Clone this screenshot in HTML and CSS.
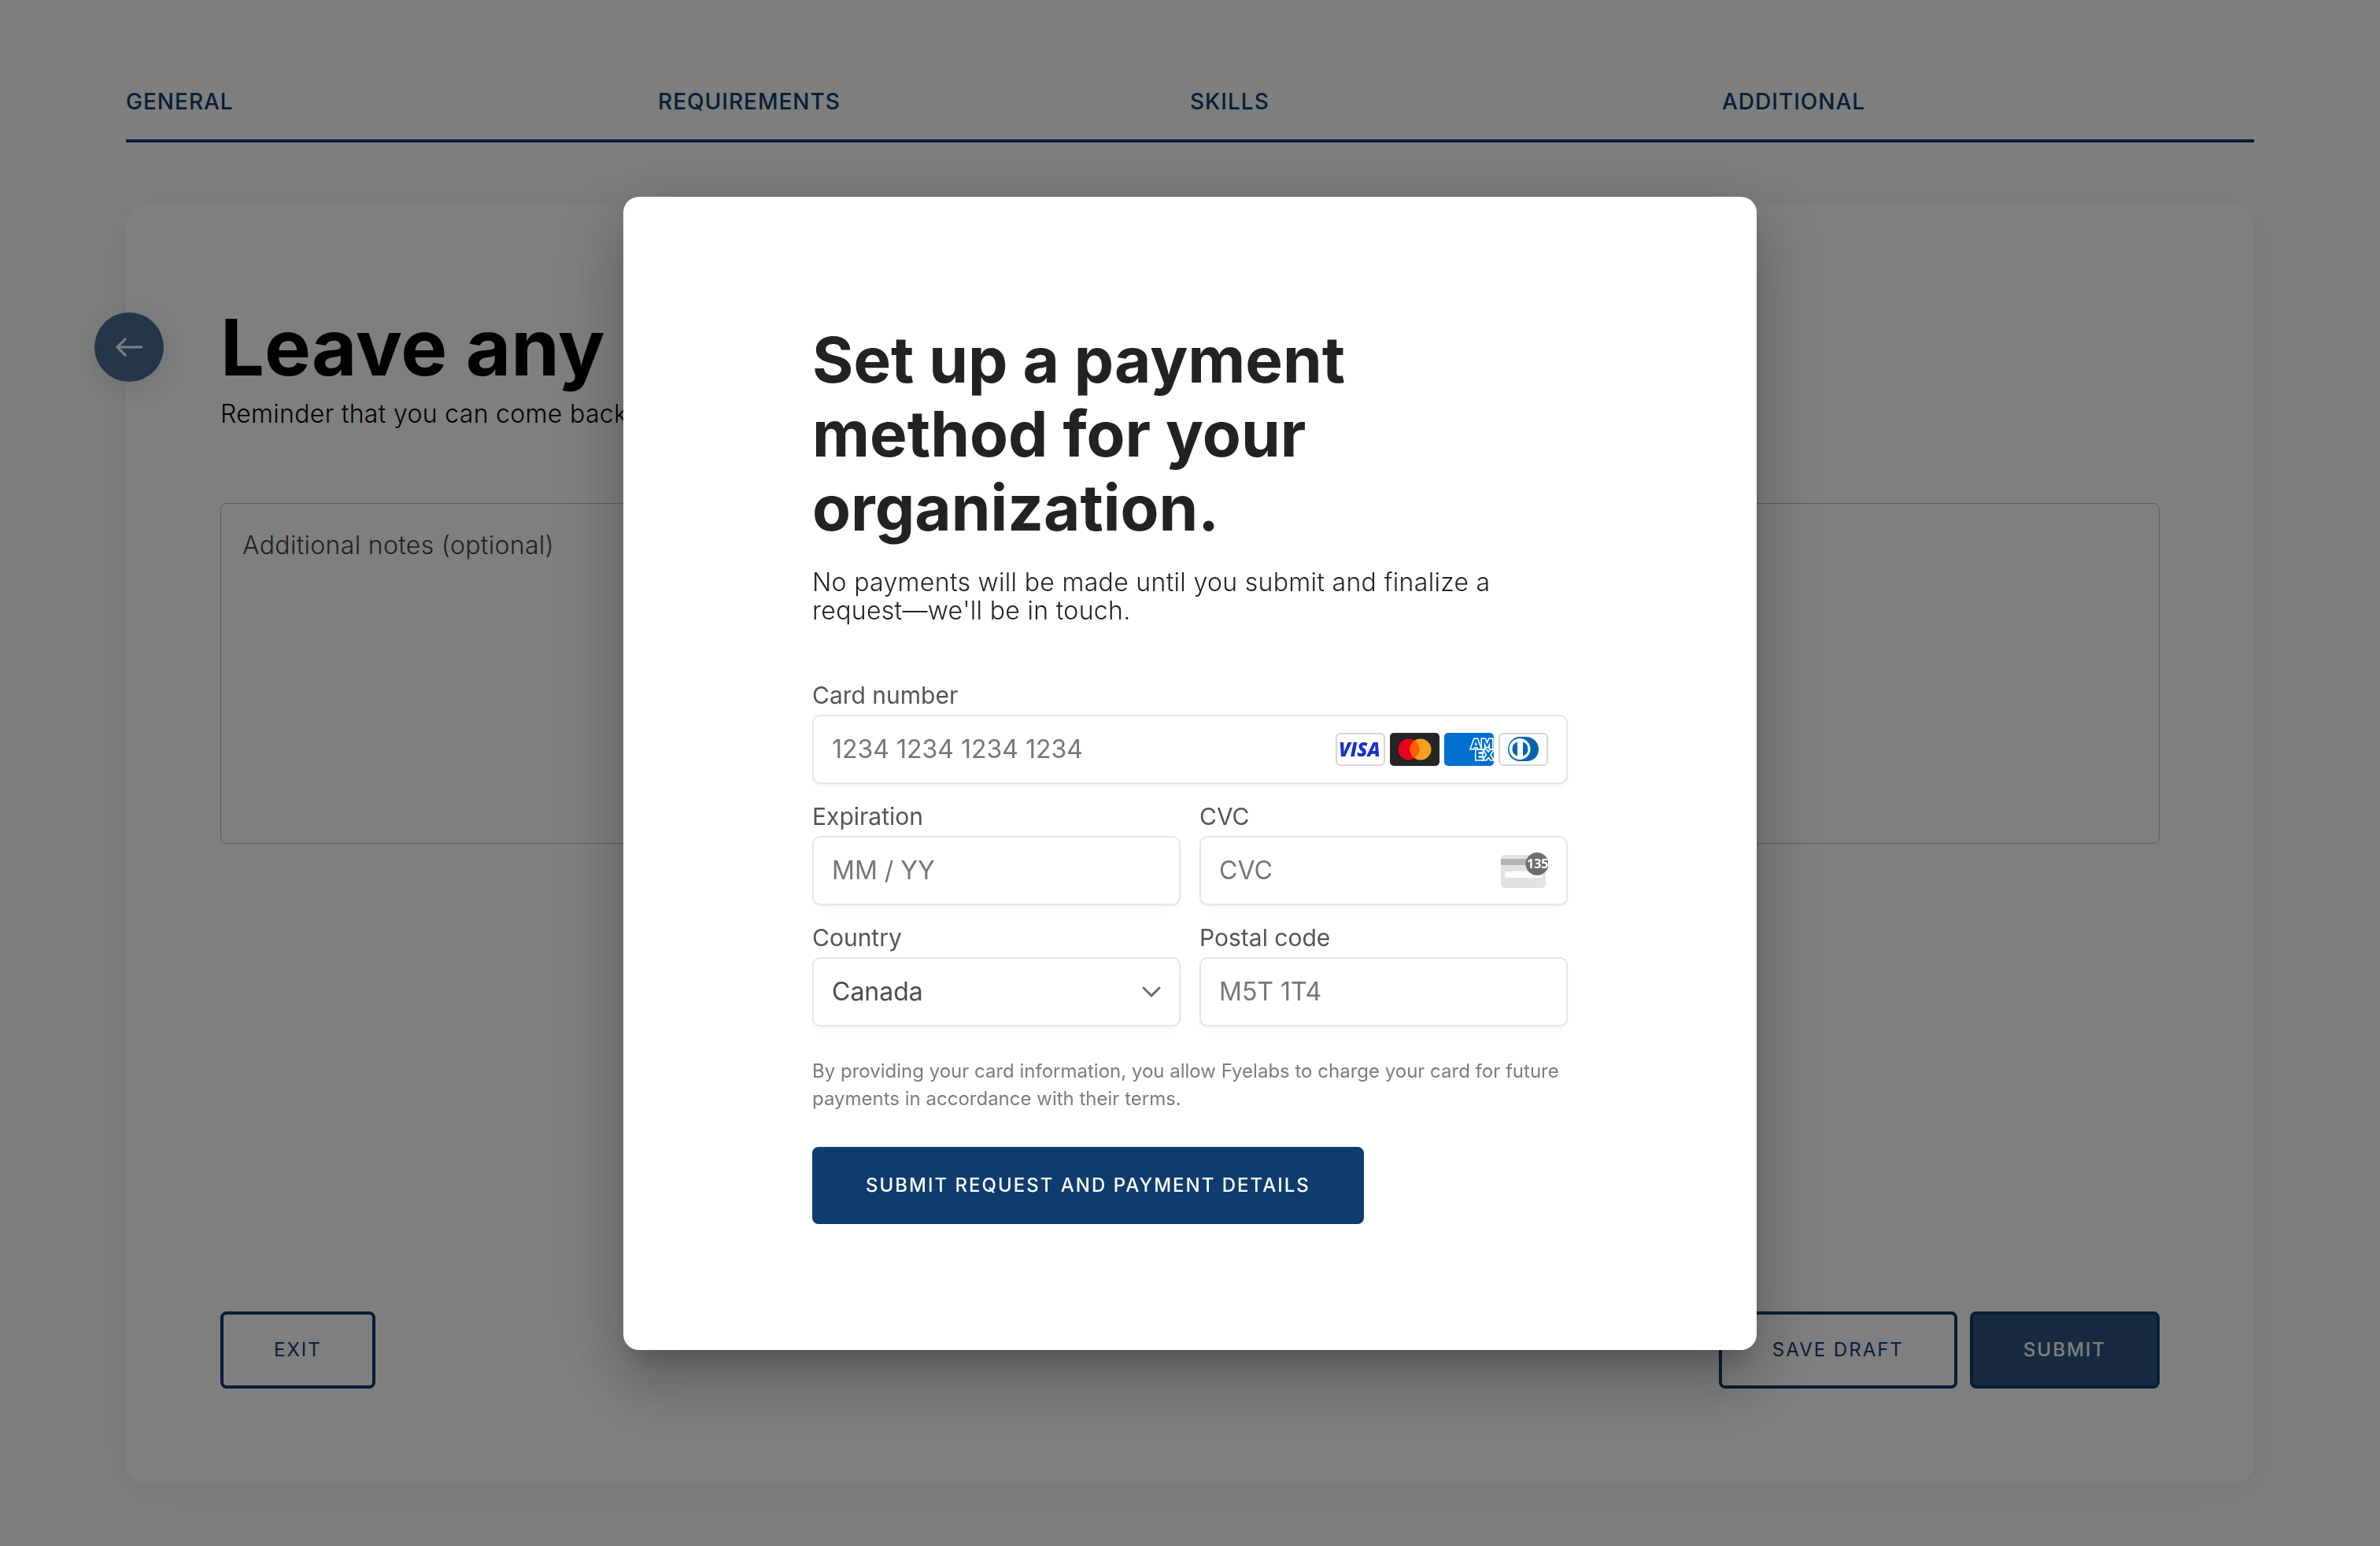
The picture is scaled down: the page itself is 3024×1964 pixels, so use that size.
FILE: index.html
```html
<!DOCTYPE html>
<html lang="en">
<head>
<meta charset="utf-8">
<meta name="viewport" content="width=device-width, initial-scale=1">
<title>Additional notes</title>
<link rel="stylesheet" href="styles.css">
</head>
<body>
<div class="page">
  <nav class="steps" aria-label="Steps">
    <a class="step" href="#general">GENERAL</a>
    <a class="step" href="#requirements">REQUIREMENTS</a>
    <a class="step" href="#skills">SKILLS</a>
    <a class="step" href="#additional">ADDITIONAL</a>
  </nav>
  <main class="card">
    <button class="back" type="button" aria-label="Back">
      <svg class="back-icon" viewBox="0 0 36 28" fill="none" stroke="currentColor" stroke-width="3"><path d="M35 14H3M14 3L3 14l11 11"/></svg>
    </button>
    <h1 class="card-title">Leave any</h1>
    <p class="card-text">Reminder that you can come back</p>
    <textarea class="notes" placeholder="Additional notes (optional)" aria-label="Additional notes (optional)"></textarea>
    <footer class="actions">
      <button class="btn btn-outline" type="button">EXIT</button>
      <div class="actions-end">
        <button class="btn btn-outline" type="button">SAVE DRAFT</button>
        <button class="btn btn-submit" type="button">SUBMIT</button>
      </div>
    </footer>
  </main>
</div>

<div class="overlay">
  <form class="modal" role="dialog" aria-modal="true" aria-labelledby="modal-title">
    <h2 class="modal-title" id="modal-title">Set up a payment method for your organization.</h2>
    <p class="modal-text">No payments will be made until you submit and finalize a request—we'll be in touch.</p>
    <div class="fields">
      <div class="field field-wide">
        <label class="label" for="number">Card number</label>
        <div class="control">
          <input class="input" id="number" type="text" placeholder="1234 1234 1234 1234">
          <div class="brands">
            <svg class="brand" viewBox="0 0 63 42"><rect x="1" y="1" width="61" height="40" rx="5" fill="#fff" stroke="#d6d6d6" stroke-width="2"/><text x="4" y="30" class="visa">VISA</text></svg>
            <svg class="brand" viewBox="0 0 63 42"><rect width="63" height="42" rx="5" fill="#252525"/><circle cx="24" cy="21" r="13.500" fill="#eb001b"/><circle cx="39" cy="21" r="13.500" fill="#f79e1b"/><path d="M31.500 9.800a13.500 13.500 0 0 1 0 22.400a13.500 13.500 0 0 1 0-22.400z" fill="#ff5f00"/></svg>
            <svg class="brand" viewBox="0 0 63 42"><defs><clipPath id="amex"><rect width="63" height="42" rx="5"/></clipPath></defs><g clip-path="url(#amex)"><rect width="63" height="42" fill="#016fd0"/><text x="34" y="20" class="amex">AM</text><text x="39" y="34" class="amex">EX</text></g></svg>
            <svg class="brand" viewBox="0 0 63 42"><rect x="1" y="1" width="61" height="40" rx="5" fill="#fff" stroke="#d6d6d6" stroke-width="2"/><path d="M27 5h8c9 0 16 7 16 16s-7 15-16 15h-8c-9 0-15-7-15-15s6-16 15-16z" fill="#0165ac"/><circle cx="27" cy="20.500" r="13.500" fill="#fff"/><path d="M24 11.500a9.500 9.500 0 0 0 0 18zM31 11.500a9.500 9.500 0 0 1 0 18z" fill="#0165ac"/></svg>
          </div>
        </div>
      </div>
      <div class="field">
        <label class="label" for="expiry">Expiration</label>
        <div class="control"><input class="input" id="expiry" type="text" placeholder="MM / YY"></div>
      </div>
      <div class="field">
        <label class="label" for="cvc">CVC</label>
        <div class="control">
          <input class="input" id="cvc" type="text" placeholder="CVC">
          <svg class="cvc-icon" viewBox="0 0 60 46"><rect y="3" width="57" height="42" rx="5" fill="#e1e3e3"/><path d="M0 8h57v8H0z" fill="#b2b5b5"/><rect x="5" y="24" width="48" height="8" rx="3" fill="#fff"/><circle cx="46" cy="14.500" r="14.500" fill="#6c6e6e"/><text x="33" y="20" class="cvc-digits">135</text></svg>
        </div>
      </div>
      <div class="field">
        <label class="label" for="country">Country</label>
        <div class="control">
          <select class="input select" id="country"><option>Canada</option></select>
          <svg class="chevron" viewBox="0 0 24 14" fill="none" stroke="#6c6e6e" stroke-width="3" stroke-linecap="round"><path d="M2 2l10 10L22 2"/></svg>
        </div>
      </div>
      <div class="field">
        <label class="label" for="postal">Postal code</label>
        <div class="control"><input class="input" id="postal" type="text" placeholder="M5T 1T4"></div>
      </div>
    </div>
    <p class="terms">By providing your card information, you allow Fyelabs to charge your card for future payments in accordance with their terms.</p>
    <button class="btn btn-pay" type="submit">SUBMIT REQUEST AND PAYMENT DETAILS</button>
  </form>
</div>
</body>
</html>
```
FILE: styles.css
```css
* { box-sizing: border-box; }

body {
  margin: 0;
  background: #fafefd;
  font-family: Inter, "Liberation Sans", sans-serif;
  color: #000;
}

button, input, select, textarea { font-family: inherit; }

.page {
  min-height: 100vh;
  padding: 109px 160px 80px;
  display: flex;
  flex-direction: column;
  gap: 80px;
}

.steps {
  display: grid;
  grid-template-columns: repeat(4, 1fr);
  padding-bottom: 28px;
  border-bottom: 4px solid #0f3c6e;
}

.step {
  font-size: 28px;
  line-height: 40px;
  font-weight: 500;
  letter-spacing: 1px;
  color: #0f3c6e;
  text-decoration: none;
}

.card {
  position: relative;
  flex: 1;
  display: flex;
  flex-direction: column;
  padding: 120px;
  border-radius: 24px;
  background: #fff;
  box-shadow: 0 8px 60px rgba(0, 0, 0, 0.06);
}

.back {
  position: absolute;
  left: -40px;
  top: 136px;
  width: 88px;
  height: 88px;
  display: grid;
  place-items: center;
  padding: 0;
  border: 0;
  border-radius: 50%;
  background: #4a6d94;
  color: #fff;
  box-shadow: 0 8px 40px rgba(0, 0, 0, 0.12);
}

.back-icon { width: 36px; height: 28px; }

.card-title {
  margin: 0;
  font-size: 99px;
  line-height: 120px;
  font-weight: 700;
}

.card-text {
  margin: 6px 0 94px;
  font-size: 32px;
  line-height: 38px;
  font-weight: 300;
  letter-spacing: 0.01em;
}

.notes {
  display: block;
  width: 100%;
  height: 433px;
  padding: 34px 27px;
  border: 1px solid #bbb;
  border-radius: 8px;
  background: transparent;
  font-size: 32px;
  line-height: 38px;
  font-weight: 300;
  letter-spacing: 0.01em;
  resize: none;
}

.notes::placeholder { color: #444; opacity: 1; }

.actions {
  display: flex;
  justify-content: space-between;
  margin-top: auto;
}

.actions-end { display: flex; gap: 16px; }

.btn {
  height: 98px;
  padding: 0 64px;
  border: 4px solid #0f3c6e;
  border-radius: 8px;
  font-size: 24px;
  line-height: 32px;
  font-weight: 500;
  letter-spacing: 2px;
}

.btn-outline { background: transparent; color: #0f3c6e; font-weight: 400; }
.btn-submit { background: #2f5480; color: #fff; }
.btn-pay { background: #0f3c6e; color: #fff; }

.overlay {
  position: fixed;
  inset: 0;
  display: grid;
  place-items: center;
  background: rgba(0, 0, 0, 0.5);
}

.modal {
  width: 1440px;
  max-width: 90%;
  padding: 160px 240px;
  border-radius: 20px;
  background: #fff;
  box-shadow: 0 22px 30px -14px rgba(0, 0, 0, 0.2), 0 48px 76px 6px rgba(0, 0, 0, 0.14), 0 18px 92px 16px rgba(0, 0, 0, 0.12);
  color: #222;
}

.modal-title {
  margin: 0;
  font-size: 80px;
  line-height: 94px;
  font-weight: 700;
}

.modal-text {
  margin: 30px 0 72px;
  font-size: 32px;
  line-height: 36px;
  font-weight: 300;
  letter-spacing: 0.01em;
}

.fields {
  display: grid;
  grid-template-columns: repeat(2, minmax(0, 1fr));
  gap: 24px;
}

.field-wide { grid-column: 1 / -1; }

.label {
  display: block;
  margin-bottom: 8px;
  font-size: 30px;
  line-height: 34px;
  color: #545656;
}

.control {
  position: relative;
  display: flex;
  align-items: center;
  height: 88px;
  padding: 0 23px;
  border: 2px solid #e6e6e6;
  border-radius: 10px;
  background: #fff;
  box-shadow: 0 2px 2px rgba(0, 0, 0, 0.03), 0 6px 12px rgba(0, 0, 0, 0.02);
}

.input {
  flex: 1;
  min-width: 0;
  height: 100%;
  padding: 0;
  border: 0;
  background: transparent;
  color: #4c4e4e;
  font-size: 32px;
  line-height: 38px;
}

.input::placeholder { color: #757777; opacity: 1; }

.select { appearance: none; }
.chevron { width: 24px; height: 14px; }
.brands { display: flex; gap: 6px; }
.brand { width: 63px; height: 42px; }
.visa { font: italic 800 24px "Open Sans", sans-serif; fill: #1a31cf; }
.amex { font: 700 16px "DejaVu Sans", sans-serif; fill: #016fd0; stroke: #fff; stroke-width: 3px; paint-order: stroke; }
.cvc-icon { width: 60px; height: 46px; }
.cvc-digits { font: 700 16px "Open Sans", sans-serif; fill: #fff; }

.terms {
  margin: 39px 0 44px;
  font-size: 24px;
  line-height: 35px;
  color: #7b7d7d;
}
```
